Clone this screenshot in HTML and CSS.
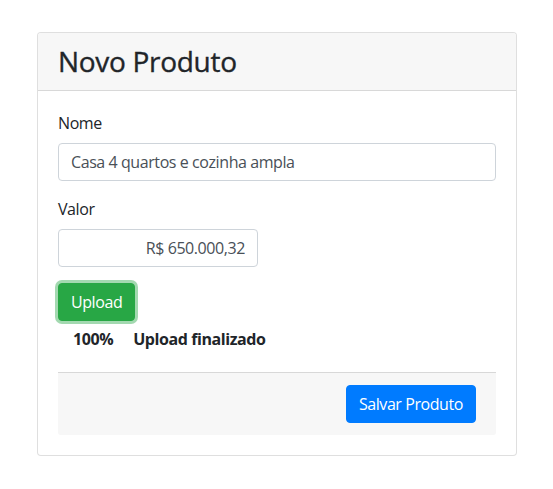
FILE: index.html
```html
<!DOCTYPE html>
<html lang="pt-BR">
<head>
<meta charset="utf-8">
<title>Novo Produto</title>
<link rel="stylesheet" href="styles.css">
</head>
<body>
<div class="page">
  <div class="card">
    <div class="card-header">
      <h3 class="title">Novo Produto</h3>
    </div>
    <div class="card-body">
      <div class="form-group">
        <label class="label">Nome</label>
        <input class="input" type="text" value="Casa 4 quartos e cozinha ampla">
      </div>
      <div class="form-group">
        <label class="label">Valor</label>
        <input class="input input-money" type="text" value="R$ 650.000,32">
      </div>
      <button class="btn btn-success">Upload</button>
      <div class="progress-line">
        <strong class="pct">100%</strong>
        <strong class="status">Upload finalizado</strong>
      </div>
      <div class="card-footer">
        <button class="btn btn-primary">Salvar Produto</button>
      </div>
    </div>
  </div>
</div>
</body>
</html>
```
FILE: styles.css
```css
* { box-sizing: border-box; }
html, body { margin: 0; padding: 0; background: #fff; }
body {
  font-family: "Open Sans", "Noto Sans", sans-serif;
  font-size: 16px;
  line-height: 1.5;
  letter-spacing: -0.42px;
  color: #212529;
}
.page {
  padding: 32px 36px 0 37px;
}
.card {
  width: 480px;
  border: 1px solid rgba(0,0,0,.125);
  border-radius: 4px;
  background: #fff;
}
.card-header {
  background: #f7f7f7;
  border-bottom: 1px solid rgba(0,0,0,.125);
  padding: 12px 20px;
  border-radius: 3px 3px 0 0;
}
.title {
  margin: 0;
  font-size: 28px;
  font-weight: 500;
  line-height: 33px;
  letter-spacing: -0.3px;
  -webkit-text-stroke: 0.35px #212529;
}
.card-body {
  padding: 20px;
}
.form-group {
  margin-bottom: 16px;
}
.label {
  display: block;
  margin-bottom: 8px;
}
.input {
  display: block;
  width: 100%;
  height: 38px;
  padding: 6px 12px;
  font: inherit;
  letter-spacing: inherit;
  color: #495057;
  background: #fff;
  border: 1px solid #ced4da;
  border-radius: 4px;
}
.input-money {
  width: 200px;
  text-align: right;
}
.btn {
  display: inline-block;
  font: inherit;
  letter-spacing: inherit;
  line-height: 1.5;
  padding: 6px 12px;
  border: 1px solid transparent;
  border-radius: 4px;
  color: #fff;
}
.btn-success {
  background: #28a745;
  border-color: #28a745;
  box-shadow: 0 0 0 3px rgba(72,180,97,.5);
}
.btn-primary {
  background: #007bff;
  border-color: #007bff;
}
.progress-line {
  display: flex;
  gap: 20px;
  padding: 6px 15px 0;
  margin-bottom: 21px;
}
.card-footer {
  background: #f7f7f7;
  border-top: 1px solid rgba(0,0,0,.125);
  padding: 12px 20px;
  text-align: right;
  border-radius: 0 0 3px 3px;
}
```
